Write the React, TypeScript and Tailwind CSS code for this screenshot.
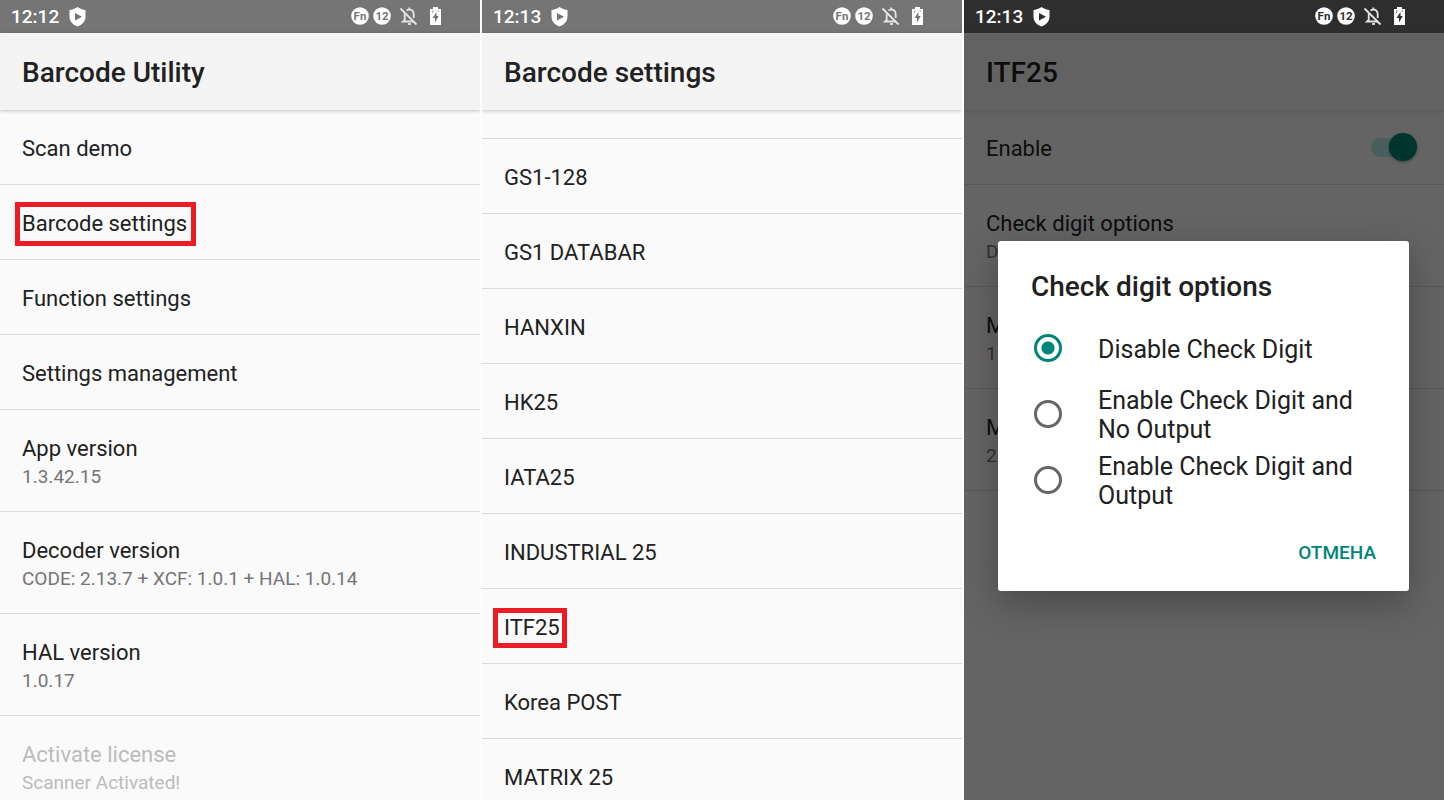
import type { ReactNode } from 'react';

type Row = { title: string; summary?: string; mark?: string; disabled?: boolean };

const MAIN_ROWS: Row[] = [
  { title: 'Scan demo' },
  { title: 'Barcode settings', mark: '-left-[7px] -right-[9px] -inset-y-[9px]' },
  { title: 'Function settings' },
  { title: 'Settings management' },
  { title: 'App version', summary: '1.3.42.15' },
  { title: 'Decoder version', summary: 'CODE: 2.13.7 + XCF: 1.0.1 + HAL: 1.0.14' },
  { title: 'HAL version', summary: '1.0.17' },
  { title: 'Activate license', summary: 'Scanner Activated!', disabled: true },
];

const SYMBOLOGIES: Row[] = [
  { title: 'Grid Matrix' },
  { title: 'GS1-128' },
  { title: 'GS1 DATABAR' },
  { title: 'HANXIN' },
  { title: 'HK25' },
  { title: 'IATA25' },
  { title: 'INDUSTRIAL 25' },
  { title: 'ITF25', mark: '-left-[11px] -right-[7px] -inset-y-[7px]' },
  { title: 'Korea POST' },
  { title: 'MATRIX 25' },
];

const ITF_ROWS: Row[] = [
  { title: 'Check digit options', summary: 'Disable Check Digit' },
  { title: 'Max length', summary: '1' },
  { title: 'Min length', summary: '2' },
];

const OPTIONS = ['Disable Check Digit', 'Enable Check Digit and No Output', 'Enable Check Digit and Output'];

function StatusBar({ time, dark }: { time: string; dark?: boolean }) {
  const hole = dark ? '#2e2e2e' : '#757575';
  return (
    <div className={`flex h-[33px] shrink-0 items-center pl-[11px] pr-[39px] text-white ${dark ? 'bg-[#2e2e2e]' : 'bg-[#757575]'}`}>
      <span className="pt-px text-[19px] font-medium leading-6">{time}</span>
      <svg className="ml-[10px]" width="17" height="20" viewBox="0 0 17 20">
        <path d="M8.5 0C6 2 3 2.6.5 3v6.5C.5 14.500 4 18 8.500 19.500 13 18 16.500 14.500 16.500 9.500V3C14 2.600 11 2 8.500 0Z" fill="#fff" />
        <path d="M6 6l7 3.800-7 3.800Z" fill={hole} />
      </svg>
      <div className="ml-auto flex items-center pb-[2px]">
        {['Fn', '12'].map(label => (
          <svg key={label} className="mr-1" width="18" height="18" viewBox="0 0 18 18">
            <circle cx="9" cy="9" r="8.800" fill="#fff" />
            <text x="9" y="13" textAnchor="middle" fontFamily="Roboto, sans-serif" fontWeight="700" fontSize="11.500" fill={hole}>{label}</text>
          </svg>
        ))}
        <svg className="ml-1" width="20" height="20" viewBox="0 0 20 20" fill="none" stroke="#e4e4e4" strokeWidth="1.800">
          <path d="M7.500 4.600C8.300 4 9 3.700 10.300 3.700c2.900 0 4.400 2.200 4.400 5V12M5.700 7.500V14L4 15.500h11" />
          <path d="M10.300 3.500v-2M1.500 2.500L17.500 18.500" />
          <path d="M9 18h3" />
        </svg>
        <svg className="ml-[11px]" width="11" height="18" viewBox="0 0 11 18">
          <path d="M3 0h5v2h3v16H0V2h3Z" fill="#fff" />
          <path d="M6.500 5L2.500 11H5v4.500L8.700 9H6.500Z" fill={hole} />
          <path d="M2 4h1.500M7.500 4H9M2 5.500h1" stroke={hole} strokeWidth="0.800" />
        </svg>
      </div>
    </div>
  );
}

function AppBar({ title, dimmed }: { title: string; dimmed?: boolean }) {
  return (
    <header className={`relative z-10 flex h-[77px] shrink-0 items-center px-[22px] pt-[2px] ${dimmed ? 'bg-[#626262] shadow-[0_1px_3px_rgba(0,0,0,0.15)]' : 'bg-[#f4f4f4] shadow-[0_1px_4px_rgba(0,0,0,0.22)]'}`}>
      <h1 className={`text-[28px] font-medium leading-8 ${dimmed ? 'text-[#0d0d0d]' : 'text-[#212121]'}`}>{title}</h1>
    </header>
  );
}

function ListRow({ row, dimmed }: { row: Row; dimmed?: boolean }) {
  const titleColor = row.disabled ? 'text-[#bcbcbc]' : dimmed ? 'text-[#0d0d0d]' : 'text-[#212121]';
  const summaryColor = row.disabled ? 'text-[#bcbcbc]' : dimmed ? 'text-[#303030]' : 'text-[#757575]';
  return (
    <li className={`border-b ${dimmed ? 'border-[#575757]' : 'border-[#dadada]'}`}>
      <button
        disabled={row.disabled}
        className={`flex w-full flex-col items-start px-[22px] text-left ${row.summary ? 'h-[101px] pt-[26px]' : 'h-[74px] justify-center pt-1'}`}
      >
        <span className={`relative text-[22px] leading-[26px] ${titleColor}`}>
          {row.title}
          {row.mark && <span className={`absolute border-[5px] border-[#ed1c24] ${row.mark}`} />}
        </span>
        {row.summary && <span className={`mt-[3px] text-[19px] leading-6 ${summaryColor}`}>{row.summary}</span>}
      </button>
    </li>
  );
}

function Screen({ children, dimmed }: { children: ReactNode; dimmed?: boolean }) {
  return (
    <section className={`relative flex h-screen min-w-0 flex-1 flex-col overflow-hidden ${dimmed ? 'bg-[#646464]' : 'bg-[#fafafa]'}`}>
      {children}
    </section>
  );
}

function OptionsDialog() {
  return (
    <div className="absolute inset-0 z-20 flex items-center justify-center pl-[34px] pr-[35px] pt-8">
      <div role="dialog" aria-labelledby="dialog-title" className="w-full rounded-[3px] bg-white px-[33px] pb-[22px] pt-[30px] shadow-[0_12px_36px_rgba(0,0,0,0.28)]">
        <h2 id="dialog-title" className="text-[28px] font-medium leading-8 text-[#212121]">Check digit options</h2>
        <div className="mt-3">
          {OPTIONS.map((option, i) => (
            <label key={option} className="flex h-[66px] items-center text-[25px] leading-[29px] text-[#212121]">
              <input
                type="radio"
                name="check-digit"
                defaultChecked={i === 0}
                className="ml-[3px] mr-9 h-7 w-7 shrink-0 appearance-none rounded-full border-[3px] border-[#666] checked:border-[#008577] checked:bg-[radial-gradient(circle,#008577_6px,transparent_7px)]"
              />
              <span className="pt-[2px]">{option}</span>
            </label>
          ))}
        </div>
        <div className="mt-6 flex justify-end">
          <button className="text-[19px] font-medium leading-8 text-[#008577]">ОТМЕНА</button>
        </div>
      </div>
    </div>
  );
}

export default function App() {
  return (
    <main className="flex gap-[2px] bg-white font-[Roboto,sans-serif]">
      <Screen>
        <StatusBar time="12:12" />
        <AppBar title="Barcode Utility" />
        <ul>
          {MAIN_ROWS.map(row => <ListRow key={row.title} row={row} />)}
        </ul>
      </Screen>

      {/* List scrolled down, first row mostly under the app bar */}
      <Screen>
        <StatusBar time="12:13" />
        <AppBar title="Barcode settings" />
        <ul className="-mt-[46px]">
          {SYMBOLOGIES.map(row => <ListRow key={row.title} row={row} />)}
        </ul>
      </Screen>

      <Screen dimmed>
        <StatusBar time="12:13" dark />
        <AppBar title="ITF25" dimmed />
        <label className="flex h-[75px] shrink-0 items-center justify-between border-b border-[#575757] pl-[22px] pr-[27px] text-[22px] text-[#0d0d0d]">
          <span className="pt-[2px]">Enable</span>
          <span className="relative flex h-7 w-[46px] items-center">
            <input type="checkbox" role="switch" defaultChecked className="h-[19px] w-10 appearance-none rounded-full bg-[#4a5f5b]" />
            <span className="absolute right-0 h-7 w-7 rounded-full bg-[#00352f] shadow-[0_1px_3px_rgba(0,0,0,0.4)]" />
          </span>
        </label>
        <ul>
          {ITF_ROWS.map(row => <ListRow key={row.title} row={row} dimmed />)}
        </ul>
        <OptionsDialog />
      </Screen>
    </main>
  );
}
